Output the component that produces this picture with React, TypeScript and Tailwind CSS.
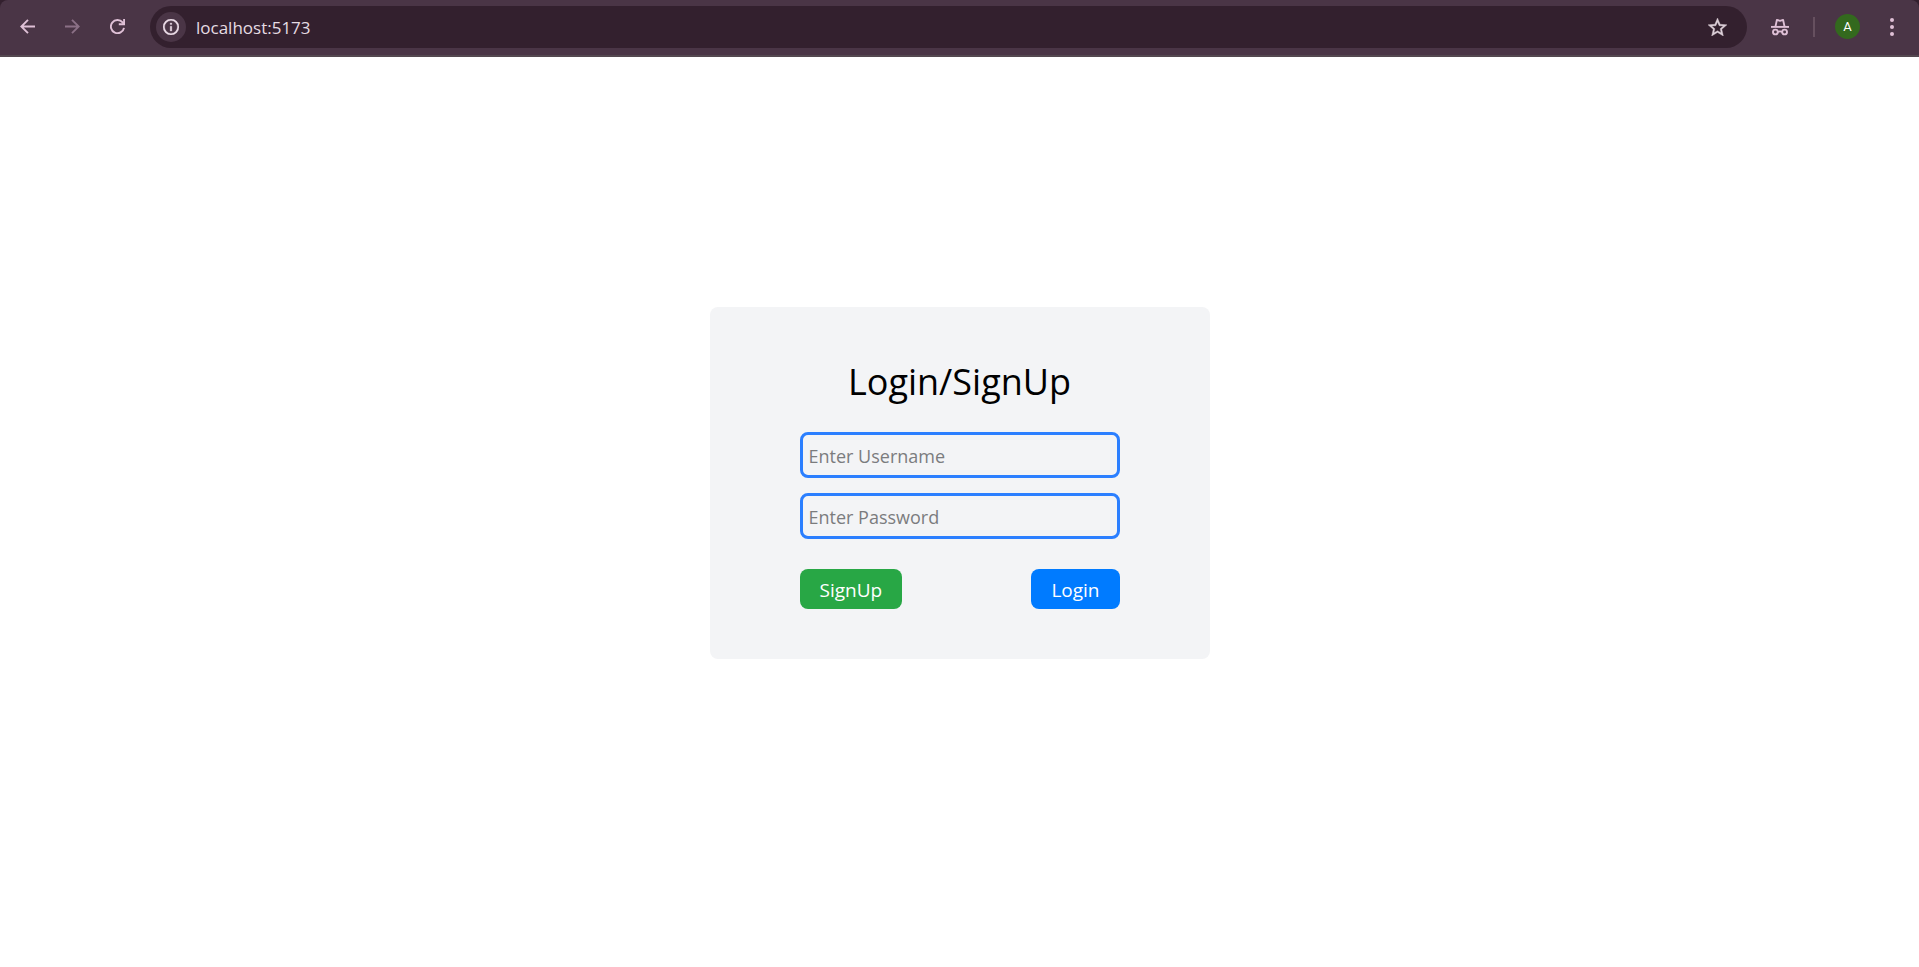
import React from "react";

function ArrowLeft() {
  return (
    <svg viewBox="0 0 15 15" className="h-[15px] w-[15px]" fill="none" stroke="currentColor" strokeWidth="1.9">
      <path d="M15 7.5H1.5M8 0.8L1.3 7.5L8 14.2" />
    </svg>
  );
}

function ArrowRight() {
  return (
    <svg viewBox="0 0 15 15" className="h-[15px] w-[15px]" fill="none" stroke="currentColor" strokeWidth="1.9">
      <path d="M0 7.5H13.5M7 0.8L13.7 7.5L7 14.2" />
    </svg>
  );
}

function Reload() {
  return (
    <svg viewBox="0 0 15 15" className="h-[15px] w-[15px]" fill="none" stroke="currentColor" strokeWidth="1.9">
      <path d="M14 8.8A6.6 6.6 0 1 1 12.6 3.4L14 5.2" />
      <path d="M14.1 0V5.3H8.8" />
    </svg>
  );
}

function Info() {
  return (
    <svg viewBox="2 2 20 20" className="h-4 w-4" fill="currentColor" stroke="currentColor" strokeWidth="0.4">
      <path d="M11 7h2v2h-2zm0 4h2v6h-2zm1-9a10 10 0 1 0 0 20 10 10 0 0 0 0-20m0 18a8 8 0 1 1 0-16 8 8 0 0 1 0 16" />
    </svg>
  );
}

function Star() {
  return (
    <svg viewBox="2 2 20 19" className="h-[18px] w-[19px]" fill="currentColor" stroke="currentColor" strokeWidth="0.4">
      <path d="m22 9.24-7.19-.62L12 2 9.19 8.63 2 9.24l5.46 4.73L5.82 21 12 17.27 18.18 21l-1.63-7.03zM12 15.4l-3.76 2.27 1-4.28-3.32-2.88 4.38-.38L12 6.1l1.71 4.04 4.38.38-3.32 2.88 1 4.28z" />
    </svg>
  );
}

function Incognito() {
  return (
    <svg viewBox="0 0 18 18" className="h-[18px] w-[18px]" fill="none" stroke="currentColor" strokeWidth="1.9">
      <path d="M0 8.9h18" />
      <path d="M4.4 8.9L5.9 1.9L9 2.8L12.1 1.9L13.6 8.9" strokeLinejoin="round" />
      <circle cx="4.4" cy="14" r="2.4" />
      <circle cx="13.6" cy="14" r="2.4" />
      <path d="M6.8 13.9q2.2-1 4.4 0" />
    </svg>
  );
}

function Dots() {
  return (
    <svg viewBox="0 0 4 18" className="h-[18px] w-1" fill="currentColor">
      <circle cx="2" cy="2" r="2" />
      <circle cx="2" cy="9" r="2" />
      <circle cx="2" cy="16" r="2" />
    </svg>
  );
}

function Toolbar() {
  return (
    <div className="bg-[#33202e]">
      <header className="flex h-[57px] items-center rounded-t-lg border-b-2 border-[#544850] bg-[#4a3546] pr-[25px] pb-0.5 pl-5 text-[#dfc0d6]">
        <nav aria-label="History" className="flex items-center gap-[30px]">
          <button aria-label="Back"><ArrowLeft /></button>
          <button aria-label="Forward" className="text-[#8b7086]"><ArrowRight /></button>
          <button aria-label="Reload"><Reload /></button>
        </nav>
        <div className="ml-[25px] flex h-[42px] flex-1 items-center rounded-full bg-[#33202e] pr-5 pl-[6px]">
          <button aria-label="Site information" className="flex h-[30px] w-[30px] items-center justify-center rounded-full bg-[#4a3546] text-[#ecdde8]">
            <Info />
          </button>
          <input
            aria-label="Address"
            defaultValue="localhost:5173"
            className="ml-2.5 min-w-0 flex-1 bg-transparent pt-0.5 text-[17px] text-[#e6dce3] outline-none"
          />
          <button aria-label="Bookmark" className="text-[#dccfd8]"><Star /></button>
        </div>
        <button aria-label="Incognito" className="ml-6"><Incognito /></button>
        <span className="ml-6 h-5 w-0.5 bg-[#66505f]" />
        <button aria-label="Profile" className="ml-5 h-[25px] w-[25px] rounded-full bg-[#33691e] font-[Roboto] text-[13px] text-white">A</button>
        <button aria-label="Menu" className="ml-[30px]"><Dots /></button>
      </header>
    </div>
  );
}

const field =
  "h-[46px] w-full rounded-lg border-3 border-[#2b7fff] bg-transparent px-1.5 pt-0.5 text-lg outline-none placeholder:text-[#7b7c7e]";

export default function App() {
  return (
    <div className="min-h-screen bg-white font-['Open_Sans','Noto_Sans',sans-serif] text-black">
      <Toolbar />
      <main className="flex justify-center px-4 py-[250px]">
        <form className="w-full max-w-[500px] rounded-lg bg-[#f3f4f6] px-[90px] py-[50px]" onSubmit={(e) => e.preventDefault()}>
          <h1 className="text-center text-4xl leading-[50px]">Login/SignUp</h1>
          <div className="mt-[25px] flex flex-col gap-[15px]">
            <input type="text" aria-label="Username" placeholder="Enter Username" className={field} />
            <input type="password" aria-label="Password" placeholder="Enter Password" className={field} />
          </div>
          <div className="mt-[30px] flex justify-between">
            <button type="button" className="h-10 rounded-lg bg-[#28a745] px-5 pt-0.5 text-[19px] text-white">SignUp</button>
            <button type="submit" className="h-10 rounded-lg bg-[#007bff] px-5 pt-0.5 text-[19px] text-white">Login</button>
          </div>
        </form>
      </main>
    </div>
  );
}
